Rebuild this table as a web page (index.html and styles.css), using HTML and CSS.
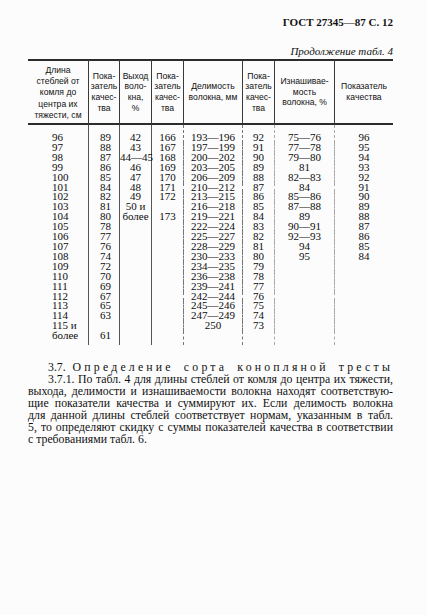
FILE: index.html
```
<!DOCTYPE html>
<html lang="ru">
<head>
<meta charset="utf-8">
<title>ГОСТ 27345—87 С. 12</title>
<link rel="stylesheet" href="styles.css">
</head>
<body>
<div class="page">
  <div class="doc-title">ГОСТ 27345—87 С. 12</div>
  <div class="table-caption">Продолжение табл. 4</div>
  <table class="norms">
    <colgroup>
      <col class="c1"><col class="c2"><col class="c3"><col class="c4"><col class="c5"><col class="c6"><col class="c7"><col class="c8">
    </colgroup>
    <thead>
      <tr>
        <th class="h-wide">Длина<br>стеблей от<br>комля до<br>центра их<br>тяжести, см</th>
        <th>Пока-<br>затель<br>качес-<br>тва</th>
        <th>Выход<br>воло-<br>кна,<br>%</th>
        <th>Пока-<br>затель<br>качес-<br>тва</th>
        <th>Делимость<br>волокна, мм</th>
        <th>Пока-<br>затель<br>качес-<br>тва</th>
        <th>Изнашивае-<br>мость<br>волокна, %</th>
        <th>Показатель<br>качества</th>
      </tr>
    </thead>
    <tbody>
      <tr><td>96</td><td>89</td><td>42</td><td>166</td><td>193—196</td><td>92</td><td>75—76</td><td>96</td></tr>
      <tr><td>97</td><td>88</td><td>43</td><td>167</td><td>197—199</td><td>91</td><td>77—78</td><td>95</td></tr>
      <tr><td>98</td><td>87</td><td>44—45</td><td>168</td><td>200—202</td><td>90</td><td>79—80</td><td>94</td></tr>
      <tr><td>99</td><td>86</td><td>46</td><td>169</td><td>203—205</td><td>89</td><td>81</td><td>93</td></tr>
      <tr><td>100</td><td>85</td><td>47</td><td>170</td><td>206—209</td><td>88</td><td>82—83</td><td>92</td></tr>
      <tr><td>101</td><td>84</td><td>48</td><td>171</td><td>210—212</td><td>87</td><td>84</td><td>91</td></tr>
      <tr><td>102</td><td>82</td><td>49</td><td>172</td><td>213—215</td><td>86</td><td>85—86</td><td>90</td></tr>
      <tr><td>103</td><td>81</td><td>50 и</td><td></td><td>216—218</td><td>85</td><td>87—88</td><td>89</td></tr>
      <tr><td>104</td><td>80</td><td>более</td><td>173</td><td>219—221</td><td>84</td><td>89</td><td>88</td></tr>
      <tr><td>105</td><td>78</td><td></td><td></td><td>222—224</td><td>83</td><td>90—91</td><td>87</td></tr>
      <tr><td>106</td><td>77</td><td></td><td></td><td>225—227</td><td>82</td><td>92—93</td><td>86</td></tr>
      <tr><td>107</td><td>76</td><td></td><td></td><td>228—229</td><td>81</td><td>94</td><td>85</td></tr>
      <tr><td>108</td><td>74</td><td></td><td></td><td>230—233</td><td>80</td><td>95</td><td>84</td></tr>
      <tr><td>109</td><td>72</td><td></td><td></td><td>234—235</td><td>79</td><td></td><td></td></tr>
      <tr><td>110</td><td>70</td><td></td><td></td><td>236—238</td><td>78</td><td></td><td></td></tr>
      <tr><td>111</td><td>69</td><td></td><td></td><td>239—241</td><td>77</td><td></td><td></td></tr>
      <tr><td>112</td><td>67</td><td></td><td></td><td>242—244</td><td>76</td><td></td><td></td></tr>
      <tr><td>113</td><td>65</td><td></td><td></td><td>245—246</td><td>75</td><td></td><td></td></tr>
      <tr><td>114</td><td>63</td><td></td><td></td><td>247—249</td><td>74</td><td></td><td></td></tr>
      <tr><td>115 и</td><td></td><td></td><td></td><td>250</td><td>73</td><td></td><td></td></tr>
      <tr><td>более</td><td>61</td><td></td><td></td><td></td><td></td><td></td><td></td></tr>
    </tbody>
  </table>
  <div class="text">
    <div class="line indent"><span>3.7.</span> <span class="spaced">Определение сорта конопляной тресты</span></div>
    <div class="line indent">3.7.1. По табл. 4 для длины стеблей от комля до центра их тяжести,</div>
    <div class="line">выхода, делимости и изнашиваемости волокна находят соответствую-</div>
    <div class="line">щие показатели качества и суммируют их. Если делимость волокна</div>
    <div class="line">для данной длины стеблей соответствует нормам, указанным в табл.</div>
    <div class="line">5, то определяют скидку с суммы показателей качества в соответствии</div>
    <div class="line last">с требованиями табл. 6.</div>
  </div>
</div>
</body>
</html>
```
FILE: styles.css
```
html, body {
  margin: 0;
  padding: 0;
  background: #fcfcfc;
}

.page {
  width: 427px;
  height: 615px;
  box-sizing: border-box;
  padding: 16px 34px 0 28px;
  font-family: "Liberation Serif", "Times New Roman", serif;
  color: #111;
}

.doc-title {
  text-align: right;
  font-weight: bold;
  font-size: 11px;
  line-height: 13px;
}

.table-caption {
  margin-top: 16px;
  text-align: right;
  font-style: italic;
  font-size: 11px;
  line-height: 13px;
}

.norms {
  margin-top: 1px;
  width: 365px;
  table-layout: fixed;
  border-collapse: separate;
  border-spacing: 0;
}

.c1 { width: 60px; }
.c2 { width: 31px; }
.c3 { width: 32px; }
.c4 { width: 32px; }
.c5 { width: 59px; }
.c6 { width: 32px; }
.c7 { width: 60px; }
.c8 { width: 59px; }

.norms th {
  height: 60px;
  padding: 0;
  border-top: 2px solid #2c2c2c;
  border-bottom: 2px solid #2c2c2c;
  font-family: "Liberation Sans", Arial, sans-serif;
  font-weight: normal;
  font-size: 8.6px;
  line-height: 10.6px;
  color: #111;
  text-align: center;
  vertical-align: middle;
}

.norms th.h-wide {
  line-height: 11.2px;
  padding-top: 2px;
}

.norms th + th {
  border-left: 1px solid #3a3a3a;
}

.norms td {
  padding: 0;
  height: 9.9px;
  font-size: 11px;
  line-height: 9.9px;
  color: #0c0c0c;
  text-align: center;
  white-space: nowrap;
}

.norms td:first-child {
  text-align: left;
  padding-left: 24px;
}

.norms td:nth-child(2) {
  padding-left: 3px;
}

.norms td:nth-child(2),
.norms td:nth-child(3),
.norms td:nth-child(4) {
  border-left: 1px solid #555;
}

.norms td:nth-child(5),
.norms td:nth-child(6) {
  border-left: 1px dashed #777;
}

.norms td:nth-child(7),
.norms td:nth-child(8) {
  border-left: 1px dashed #aaa;
}

.norms tbody tr:first-child td {
  padding-top: 8px;
}

.norms tbody tr:last-child td {
  padding-bottom: 4px;
}

.text {
  margin-top: 16px;
  width: 365px;
  font-size: 11.8px;
  line-height: 12px;
}

.line {
  text-align: justify;
  text-align-last: justify;
  white-space: nowrap;
}

.line.last {
  text-align-last: left;
}

.indent {
  padding-left: 20px;
  white-space: normal;
}

.spaced {
  letter-spacing: 3.2px;
}
```
